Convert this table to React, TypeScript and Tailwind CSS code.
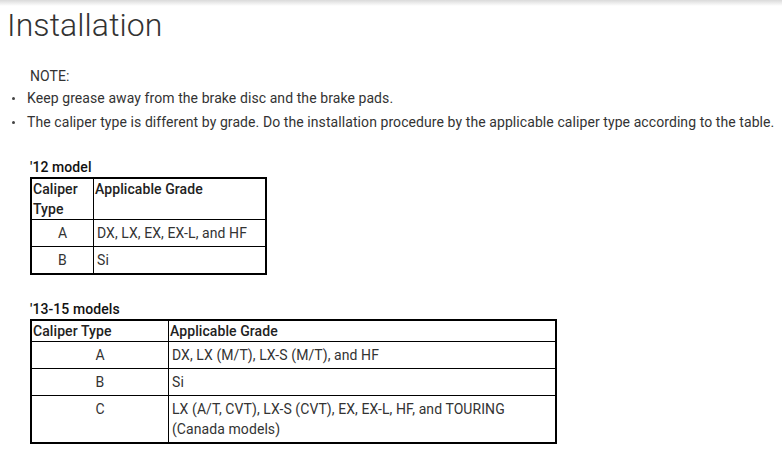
import React from "react";

const rows1 = [
  { t: "A", g: "DX, LX, EX, EX-L, and HF" },
  { t: "B", g: "Si" },
];

const rows2 = [
  { t: "A", g: "DX, LX (M/T), LX-S (M/T), and HF" },
  { t: "B", g: "Si" },
  { t: "C", g: "LX (A/T, CVT), LX-S (CVT), EX, EX-L, HF, and TOURING (Canada models)" },
];

export default function App() {
  return (
    <div
      className="w-[782px] h-[454px] bg-white text-[#333] text-[14px] leading-5 tracking-[0.08px] overflow-hidden"
      style={{ fontFamily: "Roboto, 'Liberation Sans', sans-serif" }}
    >
      <div className="h-[6px] bg-gradient-to-b from-[#dadada] to-white" />
      <h1 className="pl-[7px] text-[32px] leading-[38px] font-light tracking-[0.1px] text-[#333]">Installation</h1>

      <div className="mt-[22px]">
        <div className="pl-[30px] mb-[2px]">NOTE:</div>
        <ul className="flex flex-col gap-[4px]">
          <li className="flex items-center">
            <span className="ml-[12px] w-[3px] h-[3px] rounded-full bg-[#444] mr-[12px]" />
            <span>Keep grease away from the brake disc and the brake pads.</span>
          </li>
          <li className="flex items-center">
            <span className="ml-[12px] w-[3px] h-[3px] rounded-full bg-[#444] mr-[12px]" />
            <span>
              The caliper type is different by grade. Do the installation procedure by the applicable caliper type
              according to the table.
            </span>
          </li>
        </ul>
      </div>

      <div className="mt-[25px] pl-[30px]">
        <div className="font-medium text-[#111]">'12 model</div>
        <div className="w-[237px] border-2 border-black">
          <div className="flex h-[40px] font-medium text-[#222]">
            <div className="w-[62px] border-r border-black pl-[1px]">Caliper Type</div>
            <div className="flex-1 pl-[1px]">Applicable Grade</div>
          </div>
          {rows1.map((r) => (
            <div key={r.t} className="flex border-t border-black">
              <div className="w-[62px] border-r border-black text-center py-[3px]">{r.t}</div>
              <div className="flex-1 pl-[3px] py-[3px]">{r.g}</div>
            </div>
          ))}
        </div>

        <div className="mt-[24px] font-medium text-[#111]">'13-15 models</div>
        <div className="w-[527px] border-2 border-black">
          <div className="flex h-[20px] font-medium text-[#222]">
            <div className="w-[137px] border-r border-black pl-[1px]">Caliper Type</div>
            <div className="flex-1 pl-[1px]">Applicable Grade</div>
          </div>
          {rows2.map((r) => (
            <div key={r.t} className="flex border-t border-black">
              <div className="w-[137px] border-r border-black text-center pt-[3px] pb-[3px]">{r.t}</div>
              <div className="flex-1 pl-[3px] pt-[3px] pb-[3px]">{r.g}</div>
            </div>
          ))}
        </div>
      </div>
    </div>
  );
}
